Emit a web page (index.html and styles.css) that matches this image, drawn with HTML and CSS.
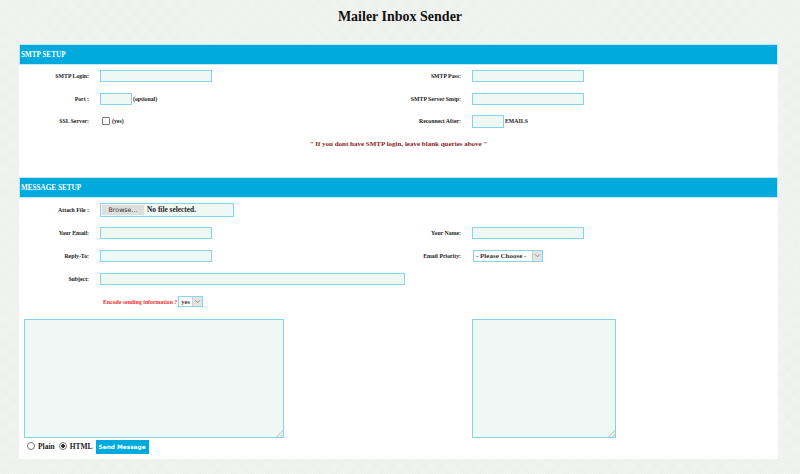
FILE: index.html
```html
<!DOCTYPE html>
<html lang="en">
<head>
<meta charset="utf-8">
<title>Mailer Inbox Sender</title>
<link rel="stylesheet" href="styles.css">
</head>
<body>
<h1 class="title">Mailer Inbox Sender</h1>
<form class="panel">
  <div class="bar">SMTP SETUP</div>
  <div class="grid smtp">
    <label class="lbl">SMTP Login:</label>
    <div class="fld"><input class="txt w112" type="text"></div>
    <label class="lbl">SMTP Pass:</label>
    <div class="fld"><input class="txt w112" type="text"></div>

    <label class="lbl">Port :</label>
    <div class="fld"><input class="txt w32" type="text"><span class="note">(optional)</span></div>
    <label class="lbl">SMTP Server Smtp:</label>
    <div class="fld"><input class="txt w112" type="text"></div>

    <label class="lbl">SSL Server:</label>
    <div class="fld"><input class="chk" type="checkbox"><span class="note">(yes)</span></div>
    <label class="lbl">Reconnect After:</label>
    <div class="fld"><input class="txt w31 tall" type="text"><span class="note">EMAILS</span></div>

    <p class="warn">" If you dont have SMTP login, leave blank queries above "</p>
  </div>

  <div class="bar">MESSAGE SETUP</div>
  <div class="grid msg">
    <label class="lbl">Attach File :</label>
    <div class="fld span3">
      <label class="file"><span class="browse">Browse...</span><span class="fname">No file selected.</span></label>
    </div>

    <label class="lbl">Your Email:</label>
    <div class="fld"><input class="txt w112" type="text"></div>
    <label class="lbl">Your Name:</label>
    <div class="fld"><input class="txt w112" type="text"></div>

    <label class="lbl">Reply-To:</label>
    <div class="fld"><input class="txt w112" type="text"></div>
    <label class="lbl">Email Priority:</label>
    <div class="fld">
      <span class="sel pri"><select><option>- Please Choose -</option></select><span class="arrow"><svg width="7" height="5" viewBox="0 0 7 5"><path d="M1 1.2 L3.5 3.8 L6 1.2" fill="none" stroke="#888" stroke-width="0.9"/></svg></span></span>
    </div>

    <label class="lbl">Subject:</label>
    <div class="fld span3"><input class="txt w305" type="text"></div>

    <div class="fld encode">
      <span class="enc">Encode sending information ?</span>
      <span class="sel yes"><select><option>yes</option></select><span class="arrow"><svg width="7" height="5" viewBox="0 0 7 5"><path d="M1 1.2 L3.5 3.8 L6 1.2" fill="none" stroke="#888" stroke-width="0.9"/></svg></span></span>
    </div>
  </div>

  <div class="grid compose">
    <textarea class="area big"></textarea>
    <textarea class="area small"></textarea>
  </div>

  <div class="actions">
    <input class="rad" type="radio" name="fmt" id="plain"><label class="opt" for="plain">Plain</label>
    <input class="rad" type="radio" name="fmt" id="html" checked><label class="opt" for="html">HTML</label>
    <button class="send" type="button">Send Message</button>
  </div>
</form>
</body>
</html>
```

FILE: styles.css
```css
html, body {
  margin: 0;
  padding: 0;
}
body {
  width: 800px;
  height: 474px;
  overflow: hidden;
  background-color: #f2f5f2;
  background-image:
    repeating-linear-gradient(45deg, rgba(0,0,0,0.01) 0 1px, transparent 1px 2px),
    repeating-linear-gradient(-45deg, rgba(0,0,0,0.01) 0 1px, transparent 1px 2px);
  font-family: "Liberation Serif", "Times New Roman", serif;
  color: #1a1a1a;
}
.title {
  margin: 0;
  height: 44px;
  box-sizing: border-box;
  padding-top: 9px;
  font-size: 14px;
  line-height: 16px;
  font-weight: bold;
  text-align: center;
  color: #111;
}
.panel {
  display: block;
  width: 759px;
  margin: 0 0 0 19px;
  background: #fff;
  padding-bottom: 5px;
}
.bar {
  height: 21px;
  box-sizing: border-box;
  background: #00aadc;
  border: 1px solid #bfe8f5;
  color: #fff;
  font-weight: bold;
  font-size: 7.2px;
  display: flex;
  align-items: center;
  padding-left: 1px;
}
.grid {
  display: grid;
  grid-template-columns: 70px 280px 70px 1fr;
  column-gap: 11px;
  align-items: center;
}
.smtp {
  grid-auto-rows: 22.5px;
  margin-bottom: 22px;
}
.msg {
  grid-auto-rows: 23px;
}
.lbl {
  justify-self: end;
  font-size: 5.8px;
  font-weight: bold;
  white-space: nowrap;
  color: #222;
}
.fld {
  display: flex;
  align-items: center;
}
.span3 {
  grid-column: 2 / 5;
}
.txt {
  box-sizing: border-box;
  height: 12px;
  margin: 0;
  padding: 0;
  border: 1px solid #84d4ee;
  background: #eef9f6;
  outline: none;
}
.tall { height: 13px; }
.w112 { width: 112px; }
.w32 { width: 32px; }
.w31 { width: 32px; }
.w305 { width: 305px; }
.note {
  font-size: 5.8px;
  font-weight: bold;
  margin-left: 1px;
  color: #222;
  white-space: nowrap;
}
.chk {
  appearance: none;
  -webkit-appearance: none;
  box-sizing: border-box;
  width: 8px;
  height: 8px;
  margin: 0 1px 0 2px;
  border: 1px solid #777;
  border-radius: 1px;
  background: #fff;
}
.warn {
  grid-column: 1 / 5;
  margin: 0;
  text-align: center;
  font-size: 7px;
  font-weight: bold;
  color: #8e1b1b;
}
.file {
  display: flex;
  align-items: center;
  box-sizing: border-box;
  width: 134px;
  height: 14px;
  border: 1px solid #84d4ee;
  background: #eef9f6;
  padding: 1px;
}
.browse {
  display: flex;
  align-items: center;
  justify-content: center;
  width: 42px;
  height: 100%;
  background: #dedede;
  border: 0;
  font-family: "DejaVu Sans", sans-serif;
  font-size: 6.3px;
  color: #333;
}
.fname {
  margin-left: 3px;
  font-size: 7.4px;
  font-weight: bold;
  color: #222;
}
.sel {
  display: inline-flex;
  align-items: stretch;
  box-sizing: border-box;
  border: 1px solid #84d4ee;
  background: #fff;
}
.sel select {
  appearance: none;
  -webkit-appearance: none;
  border: 0;
  margin: 0;
  padding: 0 0 0 2px;
  background: transparent;
  font-family: "Liberation Serif", serif;
  font-weight: bold;
  color: #333;
  outline: none;
}
.sel .arrow {
  display: flex;
  align-items: center;
  justify-content: center;
  width: 9px;
  background: #e4e4e4;
  border-left: 1px solid #cfcfcf;
}
.pri {
  width: 70px;
  height: 12px;
  margin-left: 1px;
}
.pri select {
  flex: 1;
  font-size: 7px;
}
.yes {
  width: 25px;
  height: 11px;
  margin-left: 1px;
}
.yes select {
  flex: 1;
  font-size: 6.5px;
}
.encode {
  grid-column: 2 / 5;
  padding-left: 3px;
}
.enc {
  font-size: 5.8px;
  font-weight: bold;
  color: #f42c2c;
  white-space: nowrap;
}
.compose {
  margin-top: 6px;
  align-items: start;
}
.area {
  box-sizing: border-box;
  height: 119px;
  margin: 0;
  padding: 0;
  border: 1px solid #84d4ee;
  background: #eef9f6;
  outline: none;
  display: block;
}
.area::-webkit-resizer {
  background:
    linear-gradient(135deg, transparent 0 76%, #d6d6d6 76% 83%, transparent 83% 89%, #d6d6d6 89% 96%, transparent 96%);
}
.big {
  grid-column: 1 / 3;
  width: 260px;
  margin-left: 5px;
}
.small {
  grid-column: 4;
  width: 144px;
}
.actions {
  display: flex;
  align-items: center;
  height: 16px;
  padding-left: 8px;
}
.rad {
  appearance: none;
  -webkit-appearance: none;
  box-sizing: border-box;
  width: 8px;
  height: 8px;
  margin: 0;
  border: 1px solid #777;
  border-radius: 50%;
  background: #fff;
}
.rad:checked {
  background: radial-gradient(circle, #333 0 1.6px, #fff 2px);
}
.opt {
  font-size: 7.5px;
  font-weight: bold;
  color: #222;
  margin: 0 4px 0 3px;
}
.send {
  height: 14px;
  width: 53px;
  margin: 1px 0 0 -1px;
  padding: 0;
  border: 0;
  background: #00aadc;
  color: #fff;
  font-family: "DejaVu Sans", sans-serif;
  font-weight: bold;
  font-size: 5.8px;
}
```
